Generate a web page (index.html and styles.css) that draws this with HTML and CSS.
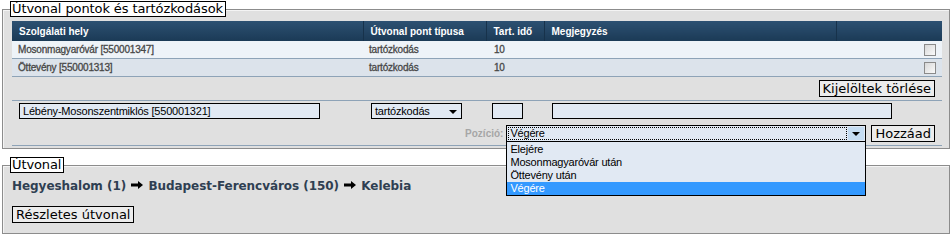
FILE: index.html
```html
<!DOCTYPE html>
<html lang="hu">
<head>
<meta charset="utf-8">
<title>Útvonal</title>
<link rel="stylesheet" href="styles.css">
</head>
<body>
<fieldset class="box box-points">
  <legend>Útvonal pontok és tartózkodások</legend>
  <table class="grid">
    <colgroup>
      <col class="w-place"><col class="w-type"><col class="w-time"><col class="w-note"><col class="w-sel">
    </colgroup>
    <thead>
      <tr><th>Szolgálati hely</th><th>Útvonal pont típusa</th><th>Tart. idő</th><th>Megjegyzés</th><th></th></tr>
    </thead>
    <tbody>
      <tr class="odd"><td>Mosonmagyaróvár [550001347]</td><td>tartózkodás</td><td class="num">10</td><td></td><td class="sel"><span class="check"></span></td></tr>
      <tr class="even"><td>Öttevény [550001313]</td><td>tartózkodás</td><td class="num">10</td><td></td><td class="sel"><span class="check"></span></td></tr>
    </tbody>
  </table>
  <div class="actions"><span class="btn">Kijelöltek törlése</span></div>
  <div class="add-form">
    <div class="add-row">
      <div class="cell c-place"><span class="field f-place">Lébény-Mosonszentmiklós [550001321]</span></div>
      <div class="cell c-type"><span class="field f-type">tartózkodás<span class="caret"></span></span></div>
      <div class="cell c-time"><span class="field f-time"></span></div>
      <div class="cell c-note"><span class="field f-note"></span></div>
    </div>
    <div class="pos-row">
      <span class="pos-label">Pozíció:</span>
      <div class="combo">
        <span class="combo-value">Végére</span>
        <span class="combo-btn"><span class="caret"></span></span>
        <ul class="combo-list">
          <li>Elejére</li>
          <li>Mosonmagyaróvár után</li>
          <li>Öttevény után</li>
          <li class="active">Végére</li>
        </ul>
      </div>
      <span class="btn">Hozzáad</span>
    </div>
  </div>
</fieldset>
<fieldset class="box box-route">
  <legend>Útvonal</legend>
  <div class="route">Hegyeshalom (1) <svg class="arrow" viewBox="0 0 12 8" width="12" height="8"><path d="M0 2.6H7V0L12 4 7 8V5.4H0Z"/></svg> Budapest-Ferencváros (150) <svg class="arrow" viewBox="0 0 12 8" width="12" height="8"><path d="M0 2.6H7V0L12 4 7 8V5.4H0Z"/></svg> Kelebia</div>
  <span class="btn btn-detail">Részletes útvonal</span>
</fieldset>
</body>
</html>
```

FILE: styles.css
```css
html, body {
  margin: 0;
  padding: 0;
  background: #fff;
}
body {
  font-family: "Liberation Sans", Arial, sans-serif;
  color: #000;
}
.box {
  margin: 1px 2px 8px 2px;
  padding: 0 7px 2px 9px;
  border: 1px solid #8c8c8c;
  box-shadow: inset 1px 1px 0 #f4f4f4;
  background: #e0e0e0;
  min-width: 0;
}
.box legend {
  margin-left: -2px;
  padding: 0 2px 0 1px;
  background: #fff;
  border: 1px solid #000;
  font-family: "DejaVu Sans", Verdana, sans-serif;
  font-size: 13px;
  letter-spacing: -0.1px;
  line-height: 14px;
  color: #000;
}
.grid {
  margin-top: 4px;
  width: 930px;
  border-collapse: collapse;
  table-layout: fixed;
  font-size: 10px;
}
.w-place { width: 351px; }
.w-type { width: 123px; }
.w-time { width: 58px; }
.w-note { width: 292px; }
.w-sel { width: 106px; }
.grid th {
  height: 20px;
  padding: 0 0 0 7px;
  text-align: left;
  font-weight: bold;
  color: #fff;
  background: linear-gradient(#2d5172, #1b3a56);
  border-left: 1px solid #17324b;
}
.grid th:first-child { border-left: 0; }
.grid td {
  height: 17px;
  padding: 0 0 0 6px;
  color: #474747;
  border-bottom: 1px solid #8ea3b7;
  letter-spacing: -0.2px;
  -webkit-text-stroke: 0.3px #474747;
}
.grid td.num { padding-left: 8px; }
.grid tr.odd td { background: #eef3f8; }
.grid tr.even td { background: #dce3eb; }
.grid td.sel {
  text-align: right;
  padding-right: 6px;
}
.check {
  display: inline-block;
  vertical-align: middle;
  width: 10px;
  height: 10px;
  border: 1px solid #8a8a8a;
  background: linear-gradient(135deg, #d8d8d8, #fafafa);
}
.actions {
  display: flex;
  justify-content: flex-end;
  padding: 3px 7px 3px 0;
  border-bottom: 1px solid #8ea3b7;
}
.btn {
  display: inline-block;
  border: 1px solid #000;
  background: #ececec;
  font-family: "DejaVu Sans", Verdana, sans-serif;
  font-size: 13px;
  line-height: 15px;
  padding: 0 3px;
  color: #000;
}
.add-form {
  border-bottom: 1px solid #8ea3b7;
  padding: 2px 0 3px 0;
}
.add-row {
  display: flex;
  height: 16px;
}
.cell { flex: none; box-sizing: border-box; }
.c-place { width: 351px; padding-left: 7px; }
.c-type { width: 123px; padding-left: 8px; }
.c-time { width: 58px; padding-left: 6px; }
.c-note { width: 292px; padding-left: 8px; }
.field {
  box-sizing: border-box;
  display: flex;
  align-items: center;
  height: 16px;
  border: 1px solid #000;
  background: #e1e9f3;
  font-size: 11px;
  letter-spacing: -0.2px;
  padding-left: 3px;
  white-space: nowrap;
}
.f-place { width: 301px; }
.f-type { width: 91px; position: relative; }
.f-time { width: 31px; }
.f-note { width: 340px; }
.caret {
  display: inline-block;
  width: 0;
  height: 0;
  border-left: 4px solid transparent;
  border-right: 4px solid transparent;
  border-top: 4px solid #000;
}
.f-type .caret {
  margin-left: auto;
  margin-right: 4px;
  margin-top: 2px;
}
.pos-row {
  display: flex;
  justify-content: flex-end;
  align-items: center;
  gap: 5px;
  margin-top: 5px;
  padding-right: 7px;
}
.pos-label {
  font-size: 10px;
  font-weight: bold;
  color: #a6a6a6;
  margin-right: -2px;
}
.combo {
  position: relative;
  box-sizing: border-box;
  width: 360px;
  height: 17px;
  border: 1px solid #000;
  background: #e1e9f3;
  display: flex;
  font-size: 11px;
  letter-spacing: -0.2px;
}
.combo-value {
  flex: 1;
  margin: 1px;
  padding-left: 2px;
  outline: 1px dotted #000;
  outline-offset: -1px;
  line-height: 13px;
}
.combo-btn {
  width: 16px;
  margin: 1px 1px 1px 0;
  background: #c4dcf2;
  display: flex;
  align-items: center;
  justify-content: center;
}
.combo-btn .caret { margin-top: 1px; }
.combo-list {
  position: absolute;
  left: -1px;
  top: 15px;
  width: 360px;
  box-sizing: border-box;
  margin: 0;
  padding: 1px 0 0 0;
  list-style: none;
  background: #e1e9f3;
  border: 1px solid #000;
  z-index: 10;
}
.combo-list li {
  height: 13px;
  line-height: 13px;
  padding-left: 3px;
  color: #000;
}
.combo-list li.active {
  background: #3399ff;
  color: #fff;
}
.pos-row .btn { margin-top: 1px; }
.route {
  margin-top: 6px;
  font-family: "DejaVu Sans", Verdana, sans-serif;
  font-weight: bold;
  font-size: 12px;
  letter-spacing: -0.05px;
  line-height: 14px;
  color: #2f3f52;
}
.arrow { vertical-align: 1px; fill: #000; margin: 0 1px; }
.btn-detail {
  margin-top: 13px;
  margin-bottom: 8px;
}
```
